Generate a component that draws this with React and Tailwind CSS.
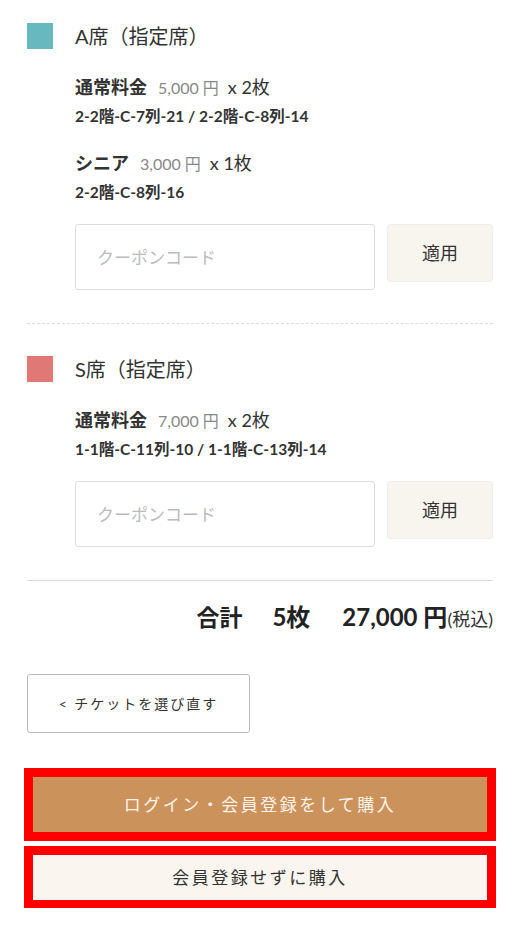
import React from 'react';

const font = { fontFamily: "Lato, 'Noto Sans CJK JP', sans-serif" };

const seatGroups = [
  {
    id: 'a',
    name: 'A席（指定席）',
    color: 'bg-[#68b8c0]',
    items: [
      { label: '通常料金', price: '5,000 円', qty: 'x 2枚', seats: '2-2階-C-7列-21 / 2-2階-C-8列-14' },
      { label: 'シニア', price: '3,000 円', qty: 'x 1枚', seats: '2-2階-C-8列-16' },
    ],
  },
  {
    id: 's',
    name: 'S席（指定席）',
    color: 'bg-[#e07876]',
    items: [
      { label: '通常料金', price: '7,000 円', qty: 'x 2枚', seats: '1-1階-C-11列-10 / 1-1階-C-13列-14' },
    ],
  },
];

const SeatGroup = ({ group }) => (
  <div>
    <div className="flex items-center gap-[22px]">
      <span className={`w-[26px] h-[26px] shrink-0 ${group.color}`} />
      <h3 className="text-[20px] leading-[26px] text-[#333]">{group.name}</h3>
    </div>

    <div className="ml-[48px]">
      {group.items.map((item, i) => (
        <div key={item.label + i} className={i === 0 ? 'mt-[26px]' : 'mt-[25px]'}>
          <div className="flex items-baseline h-[24px] leading-[24px]">
            <span className="text-[18px] font-bold text-[#333]">{item.label}</span>
            <span className="ml-[11px] text-[16px] text-[#888]">{item.price}</span>
            <span className="ml-[9px] text-[18px] text-[#333]">{item.qty}</span>
          </div>
          <p className="mt-[7px] text-[15.5px] leading-[20px] font-bold text-[#333]">{item.seats}</p>
        </div>
      ))}

      {/* Coupon */}
      <div className="mt-[22px] flex items-start gap-[12px]">
        <input
          type="text"
          placeholder="クーポンコード"
          className="w-[300px] h-[66px] border border-[#ddd] rounded-[3px] px-[21px] text-[17px] text-[#333] placeholder:text-[#bbb] outline-none"
          style={font}
        />
        <button
          className="w-[106px] h-[58px] bg-[#f8f4ee] border border-[#eee] rounded-[3px] text-[18px] text-[#333]"
          style={font}
        >
          適用
        </button>
      </div>
    </div>
  </div>
);

export default function App() {
  return (
    <div className="bg-white w-[511px] min-h-[930px] pl-[27px] pr-[18px] pt-[23px]" style={font}>
      <SeatGroup group={seatGroups[0]} />

      <div className="mt-[33px] mb-[32px] border-t border-dashed border-[#ddd]" />

      <SeatGroup group={seatGroups[1]} />

      <div className="mt-[33px] border-t border-[#ddd]" />

      {/* Total */}
      <div className="mt-[21px] flex items-baseline justify-end text-[#222] leading-[30px]">
        <span className="text-[23px] font-bold">合計</span>
        <span className="ml-[30px] text-[24px] font-bold">5枚</span>
        <span className="ml-[32px] text-[24px] font-bold">27,000 円</span>
        <span className="text-[18px] text-[#333]">(税込)</span>
      </div>

      {/* Back */}
      <button className="block mt-[40px] w-[223px] h-[59px] border border-[#bbb] rounded-[3px] bg-white text-[14px] tracking-[2px] text-[#333]" style={font}>
        &lt; チケットを選び直す
      </button>

      {/* Purchase buttons */}
      <div className="mt-[35px] -mx-[3px] flex flex-col gap-[5px]">
        <div className="border-[9px] border-[#ff0000]">
          <button className="block w-full h-[55px] bg-[#cc925c] text-[17px] tracking-[2.5px] text-[#fbf3ea]" style={font}>
            ログイン・会員登録をして購入
          </button>
        </div>
        <div className="border-[9px] border-b-[8px] border-[#ff0000]">
          <button className="block w-full h-[45px] bg-[#faf5ef] text-[17px] tracking-[2.5px] text-[#333]" style={font}>
            会員登録せずに購入
          </button>
        </div>
      </div>
    </div>
  );
}
